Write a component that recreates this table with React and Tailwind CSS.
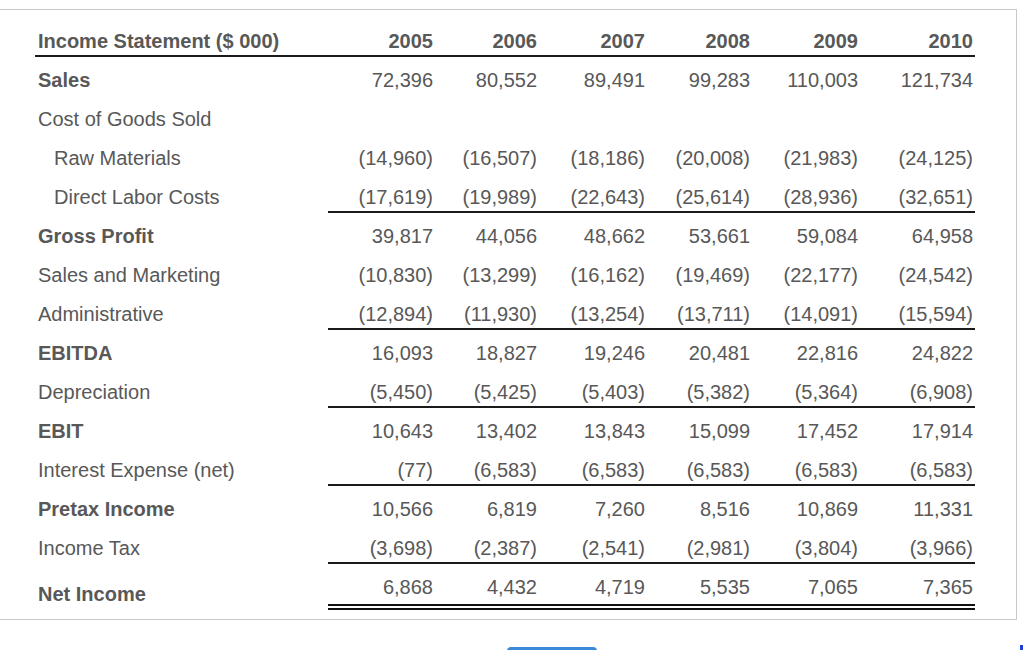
import React from 'react';

const years = ['2005', '2006', '2007', '2008', '2009', '2010'];
const colWidths = ['w-[107px]', 'w-[104px]', 'w-[108px]', 'w-[105px]', 'w-[108px]', 'w-[115px]'];

// line: draw a rule under the number cells of that row
const rows = [
    { label: 'Sales', bold: true, values: ['72,396', '80,552', '89,491', '99,283', '110,003', '121,734'] },
    { label: 'Cost of Goods Sold', values: [] },
    { label: 'Raw Materials', indent: true, values: ['(14,960)', '(16,507)', '(18,186)', '(20,008)', '(21,983)', '(24,125)'] },
    { label: 'Direct Labor Costs', indent: true, line: true, values: ['(17,619)', '(19,989)', '(22,643)', '(25,614)', '(28,936)', '(32,651)'] },
    { label: 'Gross Profit', bold: true, values: ['39,817', '44,056', '48,662', '53,661', '59,084', '64,958'] },
    { label: 'Sales and Marketing', values: ['(10,830)', '(13,299)', '(16,162)', '(19,469)', '(22,177)', '(24,542)'] },
    { label: 'Administrative', line: true, values: ['(12,894)', '(11,930)', '(13,254)', '(13,711)', '(14,091)', '(15,594)'] },
    { label: 'EBITDA', bold: true, values: ['16,093', '18,827', '19,246', '20,481', '22,816', '24,822'] },
    { label: 'Depreciation', line: true, values: ['(5,450)', '(5,425)', '(5,403)', '(5,382)', '(5,364)', '(6,908)'] },
    { label: 'EBIT', bold: true, values: ['10,643', '13,402', '13,843', '15,099', '17,452', '17,914'] },
    { label: 'Interest Expense (net)', line: true, values: ['(77)', '(6,583)', '(6,583)', '(6,583)', '(6,583)', '(6,583)'] },
    { label: 'Pretax Income', bold: true, values: ['10,566', '6,819', '7,260', '8,516', '10,869', '11,331'] },
    { label: 'Income Tax', line: true, values: ['(3,698)', '(2,387)', '(2,541)', '(2,981)', '(3,804)', '(3,966)'] },
];

const netIncome = ['6,868', '4,432', '4,719', '5,535', '7,065', '7,365'];

function Row({ row }) {
    return (
        <div className="flex">
            <div className={`w-[293px] h-[39px] pt-[13px] leading-[20px] ${row.indent ? 'pl-[19px]' : 'pl-[3px]'} ${row.bold ? 'font-bold' : ''}`}>
                {row.label}
            </div>
            {years.map((y, i) => (
                <div
                    key={y}
                    className={`${colWidths[i]} h-[39px] pt-[13px] pr-[2px] leading-[20px] text-right ${row.line ? 'border-b-2 border-[#1a1a1a]' : ''}`}
                >
                    {row.values[i] || ''}
                </div>
            ))}
        </div>
    );
}

export default function App() {
    return (
        <div className="w-[1024px] h-[650px] bg-white overflow-hidden relative" style={{ fontFamily: '"Liberation Sans", Arial, sans-serif' }}>
            <div className="mt-[9px] w-[1017px] border-t border-r border-b border-[#c9c9c9] pl-[35px] pb-[9px] text-[20px] text-[#585858]">
                {/* Header */}
                <div className="flex w-[940px] border-b-2 border-[#1a1a1a] font-bold">
                    <div className="w-[293px] pt-[21px] pb-[4px] pl-[3px] leading-[20px]">Income Statement ($ 000)</div>
                    {years.map((y, i) => (
                        <div key={y} className={`${colWidths[i]} pt-[21px] pb-[4px] pr-[2px] leading-[20px] text-right`}>{y}</div>
                    ))}
                </div>

                {rows.map((r) => <Row key={r.label} row={r} />)}

                {/* Net income with double rule */}
                <div className="flex">
                    <div className="w-[293px] h-[46px] pt-[20px] pl-[3px] leading-[20px] font-bold">Net Income</div>
                    {netIncome.map((v, i) => (
                        <div key={i} className={`${colWidths[i]} h-[46px] pt-[13px] pr-[2px] leading-[20px] text-right border-b-[6px] border-double border-[#111111]`}>
                            {v}
                        </div>
                    ))}
                </div>
            </div>

            {/* button peeking in at the bottom */}
            <div className="absolute left-[507px] top-[647px] w-[90px] h-[10px] rounded-t-[4px] bg-[#3b8ad6]" />
            <div className="absolute left-[1020px] top-[645px] w-[3px] h-[6px] bg-[#1f3fd8]" />
        </div>
    );
}
